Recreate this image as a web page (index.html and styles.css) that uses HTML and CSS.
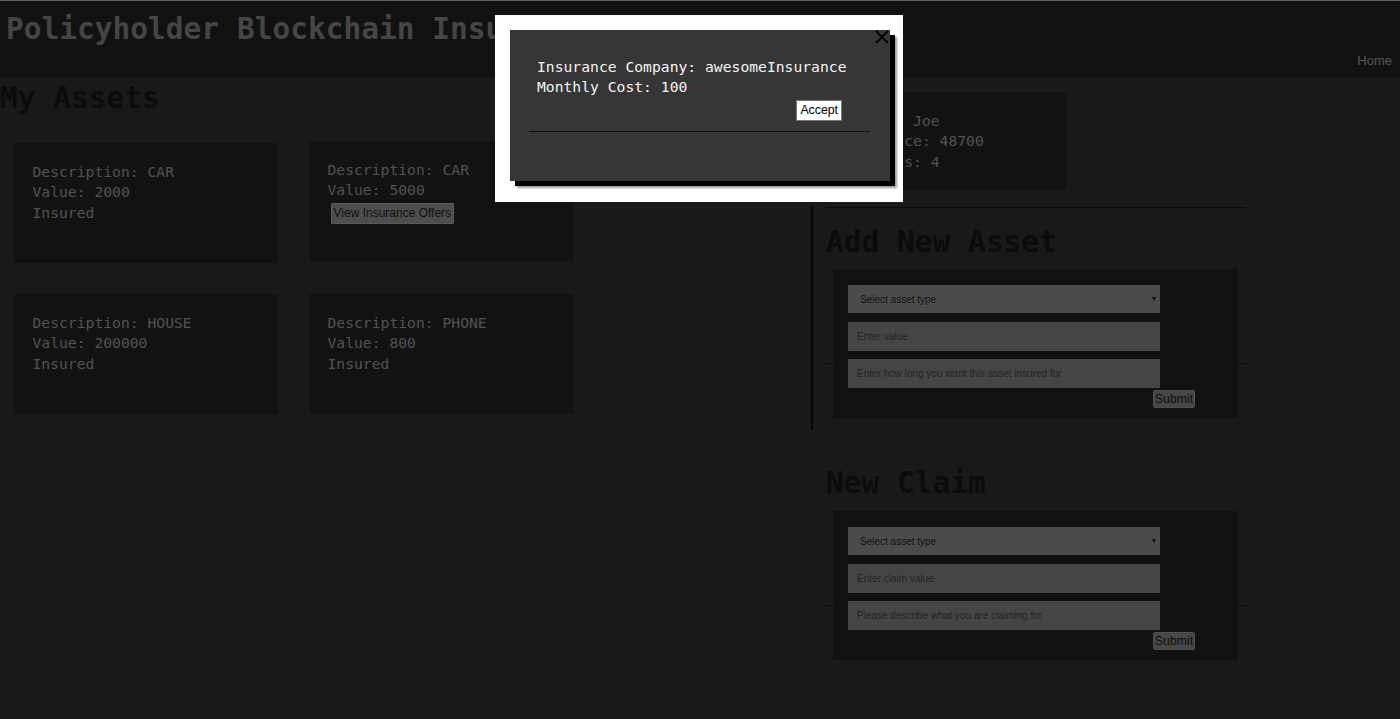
FILE: index.html
```html
<!DOCTYPE html>
<html lang="en">
<head>
<meta charset="utf-8">
<title>Policyholder Blockchain Insurance</title>
<link rel="stylesheet" href="styles.css">
</head>
<body>
<header class="topbar">
  <h1 class="brand">Policyholder Blockchain Insurance</h1>
  <nav class="nav"><a class="nav-link" href="#">Home</a></nav>
</header>
<main class="layout">
  <section class="assets">
    <h2 class="heading heading-assets">My Assets</h2>
    <div class="asset-grid">
      <div class="card asset">
        <div class="line">Description: CAR</div>
        <div class="line">Value: 2000</div>
        <div class="line">Insured</div>
      </div>
      <div class="card asset asset-raised">
        <div class="line">Description: CAR</div>
        <div class="line">Value: 5000</div>
        <button class="btn offers-btn" type="button">View Insurance Offers</button>
      </div>
      <div class="card asset">
        <div class="line">Description: HOUSE</div>
        <div class="line">Value: 200000</div>
        <div class="line">Insured</div>
      </div>
      <div class="card asset">
        <div class="line">Description: PHONE</div>
        <div class="line">Value: 800</div>
        <div class="line">Insured</div>
      </div>
    </div>
  </section>
  <aside class="side">
    <div class="card profile">
      <div class="line">Name: Joe</div>
      <div class="line">Balance: 48700</div>
      <div class="line">Assets: 4</div>
    </div>
    <section class="panel panel-bordered">
      <hr class="rule">
      <h2 class="heading heading-panel">Add New Asset</h2>
      <div class="form-wrap">
        <form class="form-box">
          <div class="select-wrap"><select class="field select"><option>Select asset type</option></select></div>
          <input class="field input-first" type="text" placeholder="Enter value">
          <input class="field input-second" type="text" placeholder="Enter how long you want this asset insured for">
          <button class="btn submit-btn" type="button">Submit</button>
        </form>
      </div>
    </section>
    <section class="panel panel-claim">
      <h2 class="heading heading-claim">New Claim</h2>
      <div class="form-wrap">
        <form class="form-box">
          <div class="select-wrap"><select class="field select"><option>Select asset type</option></select></div>
          <input class="field input-first" type="text" placeholder="Enter claim value">
          <input class="field input-second" type="text" placeholder="Please describe what you are claiming for">
          <button class="btn submit-btn" type="button">Submit</button>
        </form>
      </div>
    </section>
  </aside>
</main>
<div class="modal">
  <div class="modal-frame">
    <div class="modal-box">
      <button class="modal-close" type="button" aria-label="Close">
        <svg width="14" height="14" viewBox="0 0 14 14"><path d="M1 1L13 13M13 1L1 13" stroke="#000" stroke-width="1.8" fill="none"/></svg>
      </button>
      <div class="modal-text">
        <div class="line">Insurance Company: awesomeInsurance</div>
        <div class="line">Monthly Cost: 100</div>
      </div>
      <div class="modal-actions"><button class="btn accept-btn" type="button">Accept</button></div>
      <hr class="modal-rule">
    </div>
  </div>
</div>
</body>
</html>
```
FILE: styles.css
```css
* { box-sizing: border-box; }
html, body { margin: 0; padding: 0; }
body {
  background: #191919;
  font-family: "DejaVu Sans Mono", "Liberation Mono", monospace;
  font-size: 14.7px;
  line-height: 20.3px;
  color: #555;
  height: 719px;
  overflow: hidden;
}

.topbar {
  height: 77px;
  border-top: 1px solid #5e5e5e;
  background: #111;
  display: flex;
  justify-content: space-between;
  align-items: flex-end;
}
.brand {
  align-self: flex-start;
  margin: 11px 0 0 6px;
  font-size: 29.5px;
  line-height: 34px;
  font-weight: bold;
  color: #454545;
  white-space: nowrap;
}
.nav { padding: 0 8px 9px 0; }
.nav-link {
  font-family: "Liberation Sans", Arial, sans-serif;
  font-size: 13px;
  line-height: 15px;
  color: #575757;
  text-decoration: none;
  display: block;
}

.layout { display: flex; align-items: flex-start; }
.assets { width: 811px; flex: none; }
.heading {
  margin: 6px 0 0 0;
  font-size: 29.5px;
  line-height: 34px;
  font-weight: bold;
  color: #0b0b0b;
  white-space: nowrap;
}
.heading-assets { margin-top: 4px; }
.asset-grid {
  margin-top: 28px;
  padding-left: 14px;
  display: grid;
  grid-template-columns: 264px 264px;
  column-gap: 31px;
  row-gap: 31px;
}
.card {
  background: #121212;
  color: #525252;
}
.asset {
  height: 120px;
  padding: 19px 18.5px;
}
.asset-raised { margin-top: -2px; margin-bottom: 2px; }
.line { white-space: nowrap; }

.btn {
  font-family: "Liberation Sans", Arial, sans-serif;
  font-size: 12.3px;
  line-height: 14px;
  cursor: pointer;
}
.offers-btn {
  display: block;
  margin: 2px 0 0 3px;
  height: 21px;
  padding: 0 2px;
  font-size: 12px;
  background: #4d4d4d;
  color: #101010;
  border: 1px solid #5a5a5a;
  border-radius: 1px;
}

.side { flex: 1; display: flex; flex-direction: column; }
.profile {
  margin: 15px 0 0 30px;
  width: 226px;
  height: 98px;
  padding: 19px 19px;
}
.panel { padding-left: 15px; }
.panel-bordered {
  margin-top: 17px;
  border-left: 2px solid #060606;
  padding-left: 13px;
  padding-bottom: 12px;
}
.rule {
  margin: 0;
  width: 420px;
  height: 0;
  border: 0;
  border-top: 1px solid #0a0a0a;
}
.heading-panel { margin-top: 17px; }
.heading-claim { margin-top: 36px; }

.form-wrap {
  width: 420px;
  margin-top: 10px;
  padding: 0 8px 0 7px;
  background: linear-gradient(#0a0a0a, #0a0a0a) 0 94px / 100% 1px no-repeat;
}
.heading-claim + .form-wrap { margin-top: 11px; }
.form-box {
  margin: 0;
  background: #111;
  padding: 16px 15px 10px;
  display: flex;
  flex-direction: column;
  align-items: flex-start;
}
.field {
  width: 312px;
  border: 0;
  outline: none;
  font-family: "Liberation Sans", Arial, sans-serif;
  font-size: 10px;
  background: #454545;
  color: #222;
  padding: 0 9px;
  margin: 0;
}
.field::placeholder { color: #232323; }
.select-wrap { position: relative; }
.select {
  height: 28px;
  appearance: none;
  -webkit-appearance: none;
  background: #4b4b4b;
  color: #111;
  padding-left: 12px;
}
.select-wrap::after {
  content: "";
  position: absolute;
  right: 4px;
  top: 12px;
  border-left: 2.5px solid transparent;
  border-right: 2.5px solid transparent;
  border-top: 4px solid #111;
}
.input-first { height: 29px; margin-top: 9px; }
.input-second { height: 29px; margin-top: 8px; }
.submit-btn {
  margin: 2px 0 0 305px;
  width: 42px;
  height: 18px;
  padding: 0;
  background: #474747;
  color: #0d0d0d;
  border: 1px solid #4f4f4f;
  border-radius: 2px;
}

.modal {
  position: fixed;
  left: 495px;
  top: 15px;
}
.modal-frame {
  width: 408px;
  height: 187px;
  background: #fff;
  padding: 15px 13px 21px 15px;
}
.modal-box {
  position: relative;
  height: 151px;
  background: #363636;
  box-shadow: 5px 5px 0 #000, 7px 7px 2px #9a9a9a;
  padding-top: 27px;
  color: #f4f4f4;
}
.modal-text { padding-left: 27px; }
.modal-close {
  position: absolute;
  top: 0;
  right: 1px;
  width: 14px;
  height: 14px;
  padding: 0;
  border: 0;
  background: none;
  display: block;
}
.modal-close svg { display: block; }
.modal-actions {
  display: flex;
  justify-content: flex-end;
  padding-right: 48px;
  margin-top: 2px;
}
.accept-btn {
  height: 21px;
  padding: 0 3px;
  background: #fff;
  color: #000;
  border: 1px solid #777;
  border-radius: 0;
}
.modal-rule {
  margin: 10px 20px 0 19px;
  height: 0;
  border: 0;
  border-top: 1px solid #111;
}
```
